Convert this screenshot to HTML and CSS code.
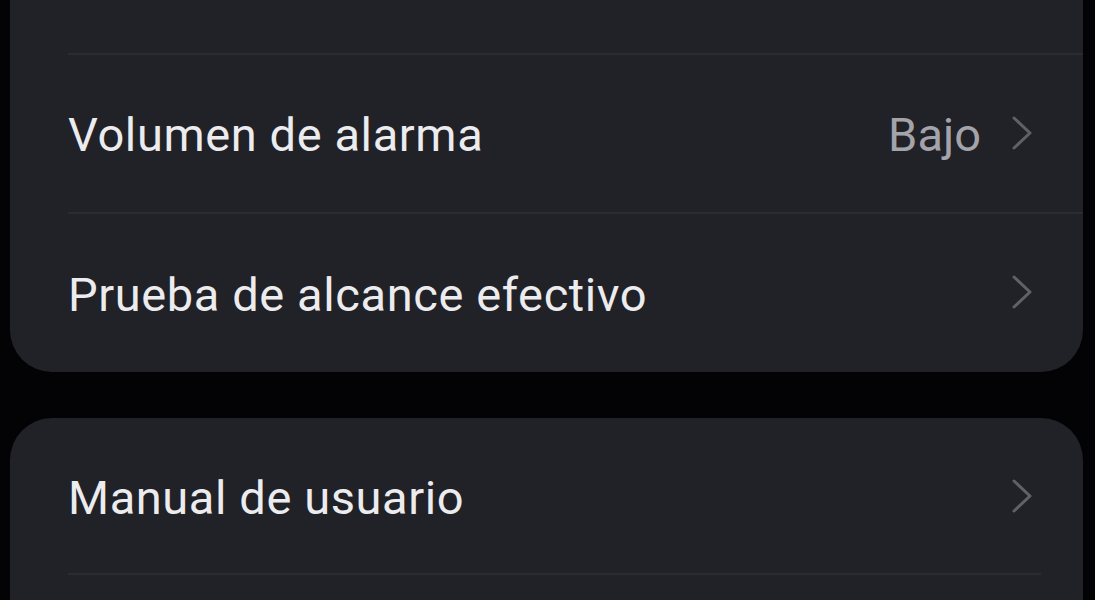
FILE: index.html
```html
<!DOCTYPE html>
<html lang="es">
<head>
<meta charset="utf-8">
<title>Ajustes</title>
<link rel="stylesheet" href="styles.css">
</head>
<body>
<div class="screen">
  <section class="card card-first">
    <div class="row">
      <span class="label">Sonido de la alarma</span>
      <span class="value">Tono 1</span>
      <svg class="chev" viewBox="0 0 22 36"><path d="M3 3 L19 18 L3 33" /></svg>
    </div>
    <div class="row">
      <span class="label">Volumen de alarma</span>
      <span class="value">Bajo</span>
      <svg class="chev" viewBox="0 0 22 36"><path d="M3 3 L19 18 L3 33" /></svg>
    </div>
    <div class="row">
      <span class="label">Prueba de alcance efectivo</span>
      <svg class="chev" viewBox="0 0 22 36"><path d="M3 3 L19 18 L3 33" /></svg>
    </div>
  </section>
  <section class="card card-second">
    <div class="row">
      <span class="label">Manual de usuario</span>
      <svg class="chev" viewBox="0 0 22 36"><path d="M3 3 L19 18 L3 33" /></svg>
    </div>
    <div class="row">
      <span class="label">Acerca del dispositivo</span>
      <svg class="chev" viewBox="0 0 22 36"><path d="M3 3 L19 18 L3 33" /></svg>
    </div>
  </section>
</div>
</body>
</html>
```
FILE: styles.css
```css
html, body {
  margin: 0;
  padding: 0;
  background: #030305;
  height: 600px;
  overflow: hidden;
}
.screen {
  padding: 0 12px 0 10px;
  display: flex;
  flex-direction: column;
  gap: 46px;
  font-family: Roboto, "Noto Sans", "Liberation Sans", sans-serif;
}
.card {
  background: #212128;
  border-radius: 42px;
  overflow: hidden;
}
.card-first {
  margin-top: -106px;
}
.row {
  height: 159px;
  display: flex;
  align-items: center;
  padding: 4px 50px 0 58px;
  box-sizing: border-box;
  position: relative;
}
.card-first .row:first-child {
  padding-top: 12px;
}
.card-first .row:last-child {
  height: 160px;
}
.card-second .row:first-child {
  height: 155px;
}
.row + .row::before {
  content: "";
  position: absolute;
  top: 0;
  left: 58px;
  right: 0;
  height: 2px;
  background: #2b2b32;
}
.card-second .row + .row::before {
  right: 42px;
}
.label {
  flex: 1;
  color: #ececee;
  font-size: 47px;
  letter-spacing: 0.6px;
}
.value {
  color: #a3a3a9;
  font-size: 47px;
  margin-right: 30px;
}
.chev {
  width: 22px;
  height: 36px;
  flex: none;
  margin-top: -4px;
}
.chev path {
  fill: none;
  stroke: #606067;
  stroke-width: 3;
  stroke-linecap: round;
  stroke-linejoin: round;
}
```
